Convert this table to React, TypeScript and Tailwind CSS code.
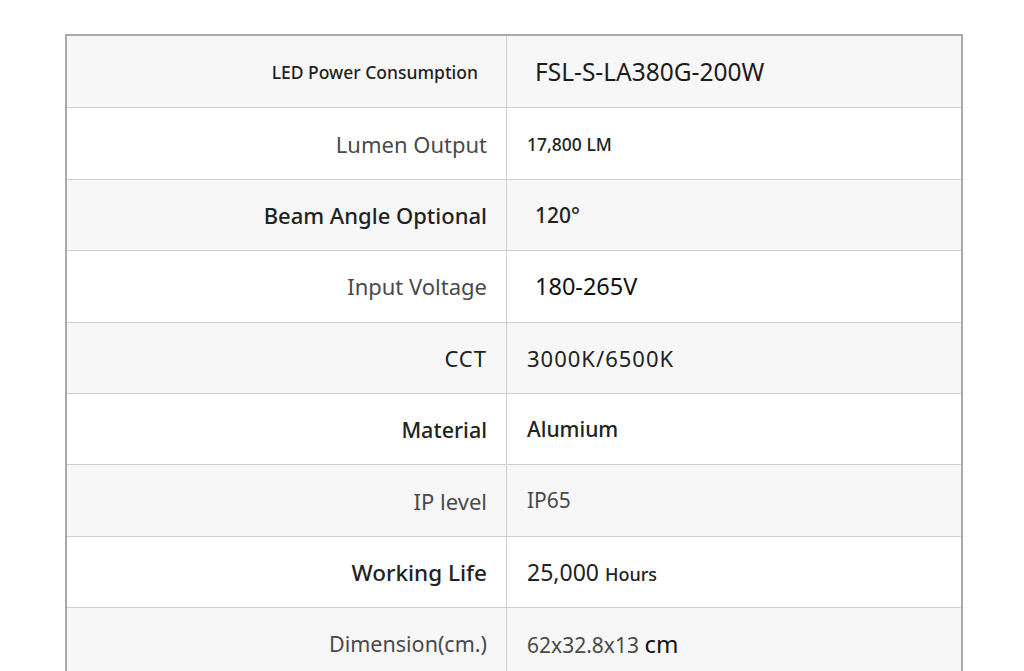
// Spec sheet table for a LED street light.

type Row = {
  label: React.ReactNode;
  value: React.ReactNode;
  labelClass: string;
  valueClass: string;
};

const rows: Row[] = [
  {
    label: 'LED Power Consumption',
    labelClass: 'pr-[28px] text-[17.5px] font-medium text-[#1f1f1f]',
    value: 'FSL-S-LA380G-200W',
    valueClass: 'pl-[28px] text-[24.5px] text-[#1c1c1c]',
  },
  {
    label: 'Lumen Output',
    labelClass: 'text-[22px] text-[#4a4a4a]',
    value: '17,800 LM',
    valueClass: 'pl-[20px] text-[17.5px] font-medium text-[#222]',
  },
  {
    label: 'Beam Angle Optional',
    labelClass: 'text-[22px] font-medium text-[#222]',
    value: '120°',
    valueClass: 'pl-[28px] text-[21px] font-medium text-[#222]',
  },
  {
    label: 'Input Voltage',
    labelClass: 'text-[22px] text-[#4a4a4a]',
    value: '180-265V',
    valueClass: 'pl-[28px] text-[23.5px] text-[#111]',
  },
  {
    label: 'CCT',
    labelClass: 'text-[22px] text-[#222] tracking-[1px]',
    value: '3000K/6500K',
    valueClass: 'pl-[20px] text-[22px] tracking-[1px] text-[#222]',
  },
  {
    label: 'Material',
    labelClass: 'text-[21.5px] font-medium text-[#222]',
    value: 'Alumium',
    valueClass: 'pl-[20px] text-[21px] font-medium text-[#222]',
  },
  {
    label: 'IP level',
    labelClass: 'text-[22px] text-[#4a4a4a]',
    value: 'IP65',
    valueClass: 'pl-[20px] text-[21px] text-[#4a4a4a]',
  },
  {
    label: 'Working Life',
    labelClass: 'text-[22.5px] font-medium text-[#222]',
    value: (
      <>
        25,000 <span className="text-[18px] font-medium">Hours</span>
      </>
    ),
    valueClass: 'pl-[20px] text-[23px] text-[#222]',
  },
  {
    label: 'Dimension(cm.)',
    labelClass: 'text-[21.5px] text-[#4a4a4a]',
    value: (
      <>
        62x32.8x13 <span className="text-[24px] text-[#111]">cm</span>
      </>
    ),
    valueClass: 'pl-[20px] text-[21px] text-[#4a4a4a]',
  },
];

export default function App() {
  return (
    <div
      className="w-[1024px] h-[671px] overflow-hidden bg-white pt-[34px] pl-[65px]"
      style={{ fontFamily: '"Noto Sans", "Open Sans", sans-serif' }}
    >
      <div className="w-[898px] border-2 border-[#a9a9a9] border-b-0">
        {rows.map((r, i) => (
          <div
            key={i}
            className={`grid grid-cols-[440px_1fr] h-[71.4px] ${
              i > 0 ? 'border-t border-[#cfcfcf]' : ''
            } ${i % 2 === 0 ? 'bg-[#f7f7f7]' : 'bg-white'}`}
          >
            <div
              className={`flex items-center justify-end pt-[1px] border-r border-[#cfcfcf] ${
                i === 0 ? '' : 'pr-[19px]'
              } ${r.labelClass}`}
            >
              {r.label}
            </div>
            <div className={`flex items-center pt-[1px] ${r.valueClass}`}>
              <span>{r.value}</span>
            </div>
          </div>
        ))}
      </div>
    </div>
  );
}
